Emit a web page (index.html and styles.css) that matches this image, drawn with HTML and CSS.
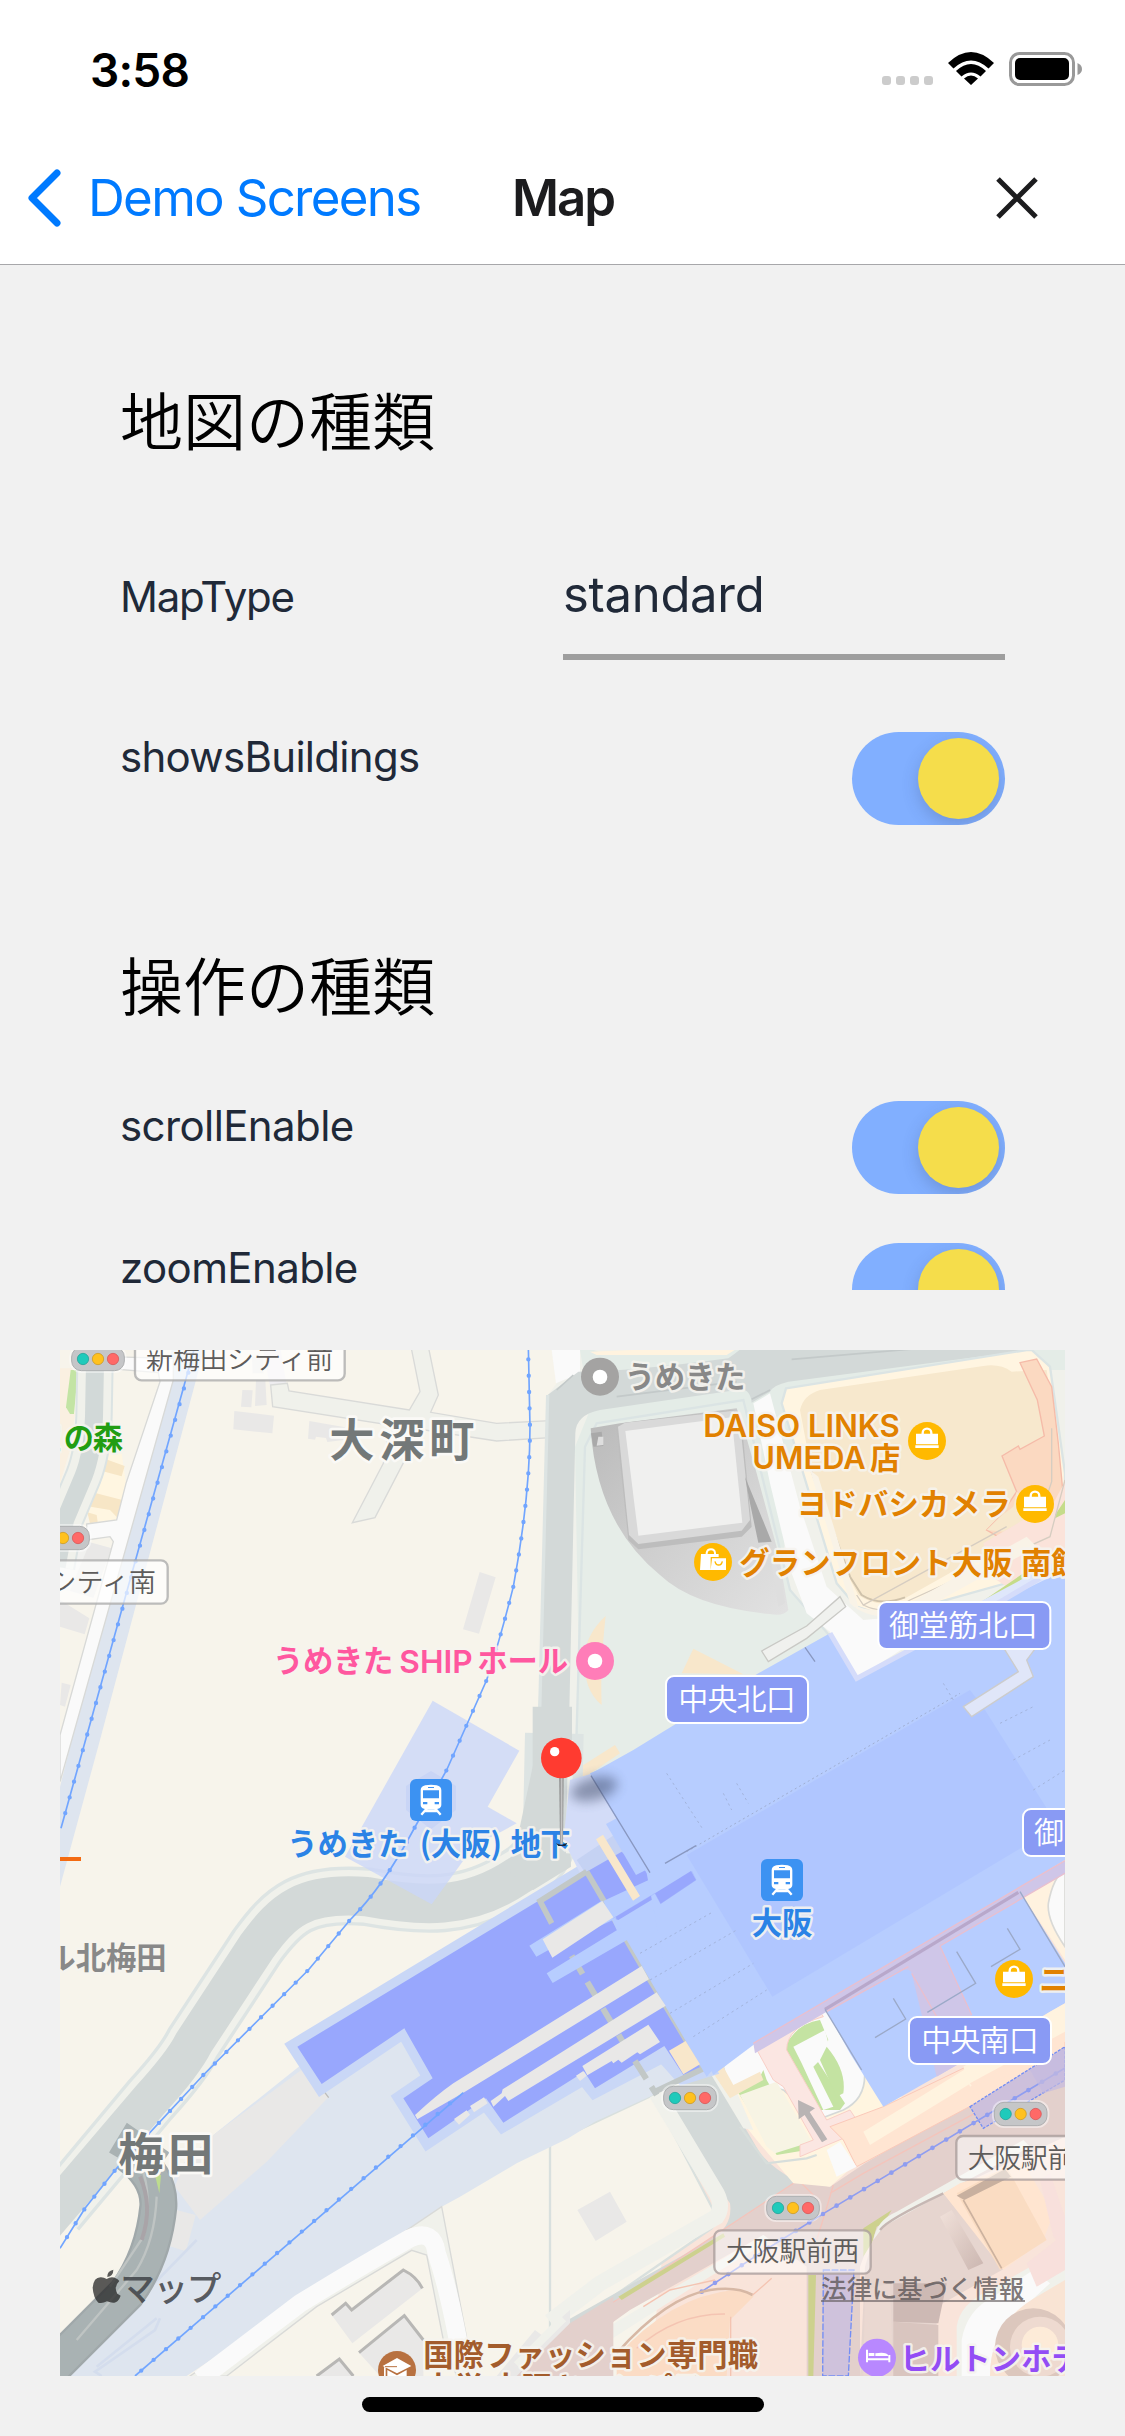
FILE: index.html
```html
<!DOCTYPE html>
<html lang="ja">
<head>
<meta charset="utf-8">
<title>Map</title>
<link rel="stylesheet" href="styles.css">
</head>
<body>
<div class="screen">
  <div class="status-bar">
    <span class="clock">3:58</span>
    <div class="indicators">
      <div class="signal"><i></i><i></i><i></i><i></i></div>
      <svg class="wifi" viewBox="0 0 46 33" width="46" height="33">
        <path d="M0 11Q23 -11 46 11L40.500 16.500Q23 0.500 5.500 16.500ZM8 19Q23 5 38 19L32.500 24.500Q23 16.500 13.500 24.500ZM16 26.500Q23 20.500 30 26.500L23 33Z"/>
      </svg>
      <svg class="battery" viewBox="0 0 73 34" width="73" height="34">
        <rect x="1.500" y="1.500" width="63" height="31" rx="9" fill="none" stroke="#999" stroke-width="3"/>
        <rect x="6" y="6" width="54" height="22" rx="5"/>
        <path d="M68.500 11Q73 13 73 17T68.500 23Z" fill="#999"/>
      </svg>
    </div>
  </div>
  <header class="nav">
    <a class="back">
      <svg viewBox="0 0 36 60" width="36" height="60"><path d="M31 5L6 30L31 55" fill="none" stroke="#007aff" stroke-width="7" stroke-linecap="round" stroke-linejoin="round"/></svg>
      <span class="back-label">Demo Screens</span>
    </a>
    <h1 class="nav-title">Map</h1>
    <svg class="close" viewBox="0 0 42 42" width="42" height="42"><path d="M2 2L40 40M40 2L2 40" fill="none" stroke="#1c1c1e" stroke-width="5"/></svg>
  </header>

  <main class="settings">
    <h2 class="section-title">地図の種類</h2>
    <div class="row row-select">
      <span class="label label-type">MapType</span>
      <div class="select"><span>standard</span></div>
    </div>
    <div class="row row-building">
      <span class="label">showsBuildings</span>
      <div class="switch"><div class="knob"></div></div>
    </div>
    <h2 class="section-title section-second">操作の種類</h2>
    <div class="row row-scroll">
      <span class="label">scrollEnable</span>
      <div class="switch"><div class="knob"></div></div>
    </div>
    <div class="row row-zoom">
      <span class="label">zoomEnable</span>
      <div class="switch"><div class="knob"></div></div>
    </div>
  </main>

  <svg class="map" viewBox="30 30 3015 3078" width="1005" height="1026">
    <defs>
      <filter id="soft" x="-50%" y="-50%" width="200%" height="200%"><feGaussianBlur stdDeviation="17"/></filter>
      <linearGradient id="plaza" x1="0" y1="0" x2="1" y2="1"><stop offset="0" stop-color="#b9b9b9"/><stop offset=".5" stop-color="#cfcfcf"/><stop offset="1" stop-color="#e2e2e2"/></linearGradient>
      <linearGradient id="tower" x1="0" y1="0" x2="1" y2="1"><stop offset="0" stop-color="#f1e1da"/><stop offset="1" stop-color="#cbb6b0"/></linearGradient>
      <linearGradient id="needle"><stop offset="0" stop-color="#777"/><stop offset=".5" stop-color="#c4c4c4"/><stop offset="1" stop-color="#888"/></linearGradient>
      <g id="signal">
        <rect x="-86" y="-42" width="172" height="84" rx="36" fill="#fff" opacity=".45"/>
        <rect x="-79" y="-35" width="158" height="70" rx="29" fill="#c5c6c8" stroke="#adafb0" stroke-width="3"/>
        <circle cx="-45" r="17" fill="#1fcabb" stroke="#189d91" stroke-width="2"/>
        <circle r="17" fill="#ffc11e" stroke="#c9941a" stroke-width="2"/>
        <circle cx="45" r="17" fill="#ff6967" stroke="#d44f4e" stroke-width="2"/>
      </g>
      <g id="bag">
        <circle r="57" fill="#ffb900"/>
        <path d="M-13 -20V-24A13 13 0 0 1 13 -24V-20" fill="none" stroke="#fff" stroke-width="7"/>
        <path d="M-33 -22H33V10H-33ZM-35 13H35V21H-35Z" fill="#fff"/>
      </g>
      <g id="train">
        <rect x="-63" y="-63" width="126" height="126" rx="18" fill="#3c92f2"/>
        <path fill-rule="evenodd" d="M-17 -44Q0 -47 17 -44Q31 -41 31 -29V14Q31 23 21 26L11 29H-11L-21 26Q-31 23 -31 14V-29Q-31 -41 -17 -44ZM-24 -29V-5H24V-29ZM-24 6V13H-11V6ZM11 6V13H24V6ZM-9 -39V-36H9V-39Z" fill="#fff"/>
        <path d="M-12 25L-29 44M12 25L29 44M-20 33H20" stroke="#fff" stroke-width="7"/>
      </g>
    </defs>

    <rect x="30" y="30" width="3015" height="3078" fill="#f7f4eb"/>

    <!-- western block and railway -->
    <path d="M30 85H68L55 200L75 222L60 330L30 430Z" fill="#faf0e1"/>
    <path d="M62 90H84L72 222H60L48 202Z" fill="#c3e4a4"/>
    <path d="M160 330L215 340L232 460L205 540L120 552L110 500L150 410Z" fill="#fff6e1"/>
    <path d="M160 355L224 378L215 409L153 392ZM133 458L217 480L207 538L180 510L122 500ZM112 517L140 525L143 545L120 550Z" fill="#f7e6c6"/>
    <path d="M30 660L80 600L185 625L130 773L30 745Z" fill="#f1f1ef"/>
    <path d="M120 607L185 625L130 773L60 752ZM30 780L118 835L104 883L30 860ZM35 1028L62 1035L45 1100L30 1095Z" fill="#e9e8e7"/>
    <path d="M135 70L132 230Q128 340 100 410L45 540L20 680" fill="none" stroke="#dbe3e3" stroke-width="112"/>
    <path d="M135 70L132 230Q128 340 100 410L45 540L20 680" fill="none" stroke="#f0f1eb" stroke-width="100"/>
    <path d="M135 70L132 230Q128 340 100 410L45 540L20 680" fill="none" stroke="#d2d9d8" stroke-width="54"/>
    <path d="M365 30H462L150 1200L30 1640V1340L65 1200Z" fill="#dee5ef"/>
    <path d="M110 552L200 540L228 430L330 125L325 98L170 85V50L370 55V120L30 1325V1185L190 605L180 590L110 600Z" fill="#fafafa" stroke="#d8d9d7" stroke-width="4"/>
    <g fill="none" stroke="#71a5ff"><path d="M436 15L33 1465" stroke-width="5"/><path d="M415 98L33 1465" stroke-width="13" stroke-linecap="round" stroke-dasharray="0 49"/></g>
    <path d="M606 50H640V100H608ZM618 120H646L650 195L615 198ZM577 150L608 151L604 202L573 200ZM553 213L672 227L667 280L550 268ZM778 243L885 262L880 300L832 306L828 294L798 290L795 299L774 296ZM1289 696L1337 712L1287 881L1239 868Z" fill="#e9e8e7"/>
    <path d="M640 30H692L712 150H662Z" fill="#eeedf0"/>
    <path d="M662 135L712 130L717 153L1078 210L1110 155L1083 20H1135L1165 165L1142 217L1340 250L1500 242V293L1340 303L1125 270L1062 365L975 533L907 548L1000 370L1020 255L668 200Z" fill="#f0f1eb" stroke="#d9dad8" stroke-width="4"/>

    <!-- northern avenue and park -->
    <path d="M1505 30H3045V1200H1550L1530 1280H1470L1490 170L1520 130Z" fill="#f0f1eb"/>
    <path d="M1505 30H1590V100L1518 130Z" fill="#fafafa"/>
    <path d="M1590 30H1630L1680 45L1950 20H3045V90H2950L2240 185L2170 1000L1590 1200L1575 320L1620 210Z" fill="#e4ece7"/>
    <path d="M1605 320L1575 1340L1850 1230L2350 900L2220 750L2080 180L1640 250Z" fill="#e6ede8" stroke="#dbe4e4" stroke-width="7"/>
    <path d="M1493 165L1585 95Q1740 95 2035 55Q2060 38 2080 20H3045V30H2940L2215 125Q2170 135 2160 155L2105 188Q2100 140 2060 150L1650 210Q1577 225 1576 280L1550 1480L1457 1500L1465 1130Z" fill="#d3d9d8"/>
    <path d="M1493 165L1472 1000L1460 1470" stroke="#dde4e3" stroke-width="10" fill="none"/>
    <path d="M1700 170L2060 125M2225 58L2670 20M1520 150L1570 105M2105 178L2160 150" fill="none" stroke="#c3c9c9" stroke-width="5"/>
    <path d="M1620 35L2000 20H2070L2030 45L1640 45Z" fill="#fff3df"/>
    <path d="M2110 190L2160 160L2250 500L2330 740L2440 840L2550 830L2600 900L2420 1015L2340 875L2270 820L2225 700L2160 430Z" fill="#fafafa"/>
    <path d="M2208 145L2930 30H2945L3000 80L3045 400V680L2510 830L2420 800L2360 730L2220 270L2195 190Z" fill="#fff5e1" stroke="#dbe4e4" stroke-width="7"/>
    <path d="M2250 210Q2260 165 2310 150L2800 78Q2850 70 2885 95L2990 90L3025 330L3000 530L2565 775Q2490 810 2425 765L2380 680L2280 370Z" fill="#f7e8cd"/>
    <path d="M2285 395L2400 710L2435 765Q2490 800 2565 772" fill="none" stroke="#cfc2ab" stroke-width="6"/>
    <path d="M2910 68L2960 57L3005 140L3025 310L3040 470L2960 650L2880 610L2810 570L2850 530L2900 455L2856 348L2905 318L2910 328L2983 288L2962 180Z" fill="#fbd9c1" stroke="#f5bba9" stroke-width="4"/>
    <path d="M2900 455L2960 520L2860 575L2810 570L2850 530L2890 500ZM2960 600L2870 610L2880 590Z" fill="#f7e8cd"/>
    <path d="M2985 535L3045 425V800L2960 800L2840 720L2800 610L2920 540Z" fill="#fbe3da"/>
    <path d="M3015 525L3045 480V520L3015 535ZM2795 785L2920 700V715L2800 800Z" fill="#c5dc8a"/>
    <path d="M2420 765L2440 795L2870 560M2440 795Q2510 830 2580 780L3000 590L3045 420M3005 265V425L2980 500" fill="none" stroke="#d6cdc1" stroke-width="4"/>
    <path d="M2425 800Q2490 825 2570 795L2930 590L2960 620L2600 820Q2460 850 2400 790L2280 390L2305 410Z" fill="#f9f3e7"/>
    <path d="M2135 933L2270 858L2370 770L2387 800L2270 895L2155 965Z" fill="#f0f1ee" stroke="#c9c9c5" stroke-width="4"/>
    <path d="M2790 785L3045 650V900H2900Z" fill="#dfe7fb"/>

    <!-- domed plaza -->
    <path d="M1622 265L1710 250L2060 205L2080 260L2120 400L2185 640L2215 810Q2200 830 2160 822Q1930 800 1830 705Q1640 550 1622 265Z" fill="url(#plaza)"/>
    <path d="M1700 270L1725 248L2050 210L2075 250L2105 560L2075 590L1765 628L1735 600Z" fill="#bdbdbd"/>
    <path d="M1704 260L1725 248L2050 212L2070 245L2100 540L2075 572L1765 612L1737 585Z" fill="#d9d9d9"/>
    <path d="M1726 273L2045 232L2077 548L1765 587Z" fill="#f0f0ef"/>
    <path d="M1623 280L1655 275L1660 318L1630 320ZM2085 410L2165 605L2125 608L2100 490Z" fill="#a9a9a9"/>
    <path d="M2160 640L2190 700L2205 790L2185 800ZM1645 290H1660V315L1640 317Z" fill="#dedede"/>
    <path d="M1667 828Q1650 980 1655 1095Q1600 1050 1602 950Q1610 880 1667 828ZM1930 926L2080 1003L1895 1000ZM1585 1285L1695 1215L1710 1240L1600 1315Z" fill="#f8e7cb"/>

    <!-- south-east district -->
    <path d="M1800 3108L1890 2225L2200 2050L3045 1550V3108Z" fill="#f9e4da"/>
    <path d="M1500 2410L1810 2265L1995 2620Q2005 2640 1985 2665L1500 3000Z" fill="#f7f4eb" stroke="#d9e0de" stroke-width="7"/>
    <path d="M1810 2260L1990 2200Q2060 2320 2130 2440Q2220 2540 2350 2550L2280 2600L2020 2700L1590 2950L1500 3000V2970L1980 2700Q2050 2660 2040 2590L1820 2290Z" fill="#d3d9d8"/>
    <path d="M1820 2260L2000 2560Q2020 2600 2000 2630L1650 2830L1500 2945" fill="none" stroke="#f0f1eb" stroke-width="48"/>
    <path d="M1500 3000L1700 2880L2245 2520L2340 2540L2445 2470L3045 2120V2390L2680 2560L2470 2670L2430 2780V3108H2270V2780L2140 2685L1900 2820L1740 2910L1530 3060L1430 3108H1400L1440 3080Z" fill="#e3d0cc"/>
    <path d="M1500 3000L1700 2880L2245 2520L2290 2565M2350 2535L2325 2620L2300 2700M2830 2290L2440 2500L2340 2560" fill="none" stroke="#f4c4bb" stroke-width="4"/>
    <path d="M1990 2210L2080 2130L2420 1990L2530 2250L2630 2330L2420 2470L2340 2540L2230 2530L2120 2400L2080 2350Z" fill="#fff5e0"/>
    <path d="M1990 2160L2040 2210L2110 2370L2080 2365L1975 2190Z" fill="#f0f1eb"/>
    <path d="M2020 2180Q2100 2080 2200 2060L2300 2000L2350 2020L2440 2170Q2460 2270 2380 2310L2300 2340L2200 2250L2120 2230L2040 2260Z" fill="#fafafa" stroke="#d5d9d8" stroke-width="5"/>
    <path d="M2205 2120Q2240 2050 2310 2040L2335 2100L2300 2160L2385 2290L2370 2310L2310 2310L2220 2160Z" fill="#c4e3a2"/>
    <path d="M2230 2120L2325 2070L2340 2130L2290 2180L2350 2300L2320 2310L2255 2170Z" fill="#fafafa"/>
    <path d="M2330 2120Q2390 2190 2380 2260L2360 2270L2310 2160ZM2060 2250L2130 2210L2140 2190L2150 2220L2270 2430L2180 2445Z" fill="#c4e3a2"/>
    <path d="M2070 2265L2180 2225L2285 2405L2175 2440L2150 2420Z" fill="#f7f4e4"/>
    <path d="M1990 2200L2020 2180L2050 2235L2130 2195L2140 2220L2040 2275Z" fill="#f8e7cb"/>
    <path d="M2070 2360L2150 2470L2270 2455L2300 2445" fill="none" stroke="#d7dedb" stroke-width="7"/>
    <path d="M2110 2110L2300 2000L2320 2030Q2210 2060 2210 2130L2330 2340L2400 2310L2440 2370L2320 2420L2250 2450V2415L2290 2400L2200 2240L2170 2220Z" fill="#fbe6e2" stroke="#f9cfc7" stroke-width="3"/>
    <path d="M2340 2360L2500 2300L2750 2180L2780 2230L2900 2160L3045 2070V2120L2890 2230L2420 2480L2380 2400Z" fill="#ffe5d2" stroke="#fbc9b9" stroke-width="3"/>
    <path d="M2440 2375L2750 2185L2770 2225L2460 2415Z" fill="#fff3df"/>
    <path d="M2330 2430L2370 2405L2420 2480L2360 2510Z" fill="#fafafa"/>
    <path d="M2244 2280L2295 2305L2279 2316L2332 2398L2316 2407L2264 2325L2246 2338Z" fill="#b9b4b4"/>
    <path d="M2760 2300L3045 2120V2220L2800 2365Z" fill="#cdc0dc" stroke="#728df5" stroke-width="4" stroke-dasharray="9 4"/>
    <path d="M2320 2790H2412L2395 3108H2318Z" fill="#cfc2dc" stroke="#728df5" stroke-width="4" stroke-dasharray="20 5"/>
    <g fill="none" stroke="#8f9df0"><path d="M1955 2855L2125 2743L2325 2618L3045 2184" stroke-width="5"/><path d="M1955 2855L2125 2743L2325 2618L3045 2184" stroke-width="14" stroke-linecap="round" stroke-dasharray="0 48"/></g>
    <path d="M1705 2870L2020 2680L2025 2690L1715 2880ZM2275 2805H2298L2290 3108H2275ZM2440 2665L2525 2610L2440 2750Z" fill="#cdd18e"/>
    <path d="M1650 2975L2140 2685L2160 2700L1930 2840L1680 3000Z" fill="#f0f1eb"/>
    <path d="M1700 3050Q1860 2870 2050 2850Q2110 2850 2110 2870L2040 2940L2030 3108H1700Z" fill="#fbdcc5"/>
    <path d="M1700 3040Q1850 2870 1980 2850Q2060 2838 2108 2865" fill="none" stroke="#d7b8a5" stroke-width="8"/>
    <path d="M1760 3025Q1880 2920 2025 2922M2108 2865L2165 2815M2042 2930V3108M1995 2820L1860 2850L1780 2900" fill="none" stroke="#f4c4b2" stroke-width="4"/>
    <path d="M2480 2660L2680 2560L2865 2785L2660 2900V3108H2430L2445 2780Z" fill="#e6d5cf"/>
    <path d="M2470 2700Q2480 2640 2540 2615L2920 2400L2940 2420L2680 2560L2500 2660Z" fill="#f0f1eb"/>
    <path d="M2490 2670Q2510 2640 2680 2560" fill="none" stroke="#c6b7b3" stroke-width="7"/>
    <path d="M2680 2560L2730 2530L2920 2470L3010 2620L2980 2700L2860 2790Z" fill="#ffe5d0"/>
    <path d="M2720 2560L2870 2480L2990 2700L2850 2790Z" fill="#fadcc2"/>
    <path d="M2720 2567L2865 2487L2883 2510L2743 2580Z" fill="#c8b09f"/>
    <path d="M2740 2580L2855 2785" stroke="#ccb29f" stroke-width="5"/>
    <path d="M2670 2630L2705 2610L2800 2770L2755 2790Z" fill="url(#tower)"/>
    <path d="M2445 2850L2520 2830L2530 3108H2440Z" fill="#ead8d1"/>
    <path d="M2530 2830H2690L2665 2950L2530 2945Z" fill="#cdb9b4"/>
    <path d="M2530 2945L2665 2955V3108H2530Z" fill="#d9c5bf"/>
    <path d="M2720 3108V2960Q2730 2890 2820 2850L3045 2720V3108Z" fill="#f0f1eb"/>
    <path d="M2735 3108V3000Q2750 2910 2830 2870L2950 2790L3000 2830L2880 2940Q2820 3010 2820 3108Z" fill="#fafafa"/>
    <path d="M2960 2870L3045 2820V3108H2820Q2820 2950 2960 2870Z" fill="#f9e4d4"/>
    <circle cx="2950" cy="3020" r="115" fill="#dcc7bd"/><circle cx="2970" cy="3020" r="90" fill="#eedad0"/><circle cx="2970" cy="3015" r="55" fill="#fdebd8"/>
    <path d="M2930 2770L3045 2680V2790L2960 2840ZM2970 2520L3000 2500L3045 2630V2730L3010 2690Z" fill="#f8e0dc"/>

    <!-- rail yard -->
    <path d="M765 2165L490 2385L375 2500L340 2700L230 2900L30 3080V3108H410L1175 2600L1230 2570L1400 2470L1555 2395L1635 2345L1810 2265L1950 2180L1560 1900L800 2150Z" fill="#dee5ef"/>
    <path d="M765 2182L835 2272L650 2465L450 2640L375 2540L400 2470L490 2385ZM360 2605L437 2625L408 2734L330 2710Z" fill="#e9e8e7"/>
    <path d="M768 2183L836 2273" stroke="#bdbcba" stroke-width="4"/>
    <path d="M440 2700L220 2925L180 2925L150 2985L30 3100M330 2935L315 2970L135 3095L155 3108M320 2935L140 3080" fill="none" stroke="#d4dded" stroke-width="8"/>
    <path d="M410 3115L1175 2600L1255 3020V3108H1220L1180 3000L1130 2745L1085 2731L800 2900L530 3108Z" fill="#f0f1eb" stroke="#d9dad8" stroke-width="4"/>
    <path d="M450 3118L750 2890Q930 2780 1080 2695Q1150 2665 1160 2740Q1200 2860 1235 3060" fill="none" stroke="#fafafa" stroke-width="55"/>
    <path d="M845 2925L887 2890L905 2910L1060 2790L1115 2840L1118 2845L907 3010ZM927 3038L1063 2927L1120 3000V3108H990ZM800 3108L868 3057L910 3108ZM1340 3108L1455 2970L1475 2985L1560 2910V3108ZM1582 2610L1680 2555L1730 2645L1637 2703Z" fill="#e9e8e7"/>
    <path d="M845 2925L887 2890L905 2910L1060 2790Q1100 2810 1117 2845M927 3038L1063 2927L1120 3000M800 3108L868 3057L910 3108" fill="none" stroke="#b8b7b5" stroke-width="9"/>
    <path d="M1400 3108L1560 2950L1690 2870V3108Z" fill="#e3d0cc"/>
    <path d="M1540 2935L1400 3075" stroke="#f0f1eb" stroke-width="24"/>

    <!-- curved main street -->
    <g fill="none">
      <path d="M1513 1180L1507 1460Q1490 1560 1400 1610C1250 1710 1110 1700 950 1670C760 1655 700 1710 620 1820L430 2110Q400 2170 300 2280L20 2615" stroke="#dde4e3" stroke-width="176"/>
      <path d="M1513 1460Q1490 1560 1400 1610C1250 1710 1110 1700 950 1670C760 1655 700 1710 620 1820L430 2110Q400 2170 300 2280L20 2615" stroke="#f0f1eb" stroke-width="156"/>
      <path d="M1507 1100V1460Q1490 1560 1400 1610C1250 1710 1110 1700 950 1670C760 1655 700 1710 620 1820L430 2110Q400 2170 300 2280L-20 2655" stroke="#d3d9d8" stroke-width="118"/>
      <path d="M1465 1200H1553L1563 1580L1450 1650L1380 1600Z" fill="#d3d9d8"/>
      <path d="M1562 1200L1556 1540" stroke="#f0f1eb" stroke-width="16"/>
      <path d="M235 2440Q330 2510 325 2600Q310 2750 230 2860L-20 3110" stroke="#a0a8aa" stroke-width="114"/>
      <path d="M235 2440Q330 2510 325 2600Q310 2750 230 2860L-20 3110" stroke="#a9b2b3" stroke-width="100"/>
      <path d="M270 2470Q310 2560 280 2690L180 2840M320 2570Q315 2700 260 2790L80 3000" stroke="#bfc4c3" stroke-width="7"/>
      <path d="M190 2445L235 2370L350 2450" stroke="#a9b2b3" stroke-width="30"/>
      <path d="M270 2510Q310 2600 275 2700" stroke="#a9a4a8" stroke-width="12"/>
    </g>
    <path d="M315 2505H333L328 2560Z" fill="#bddc8e"/>
    <path d="M1148 1082L1408 1232L1313 1400L1400 1450L1270 1520L1145 1693L885 1550Z" fill="#cbd6f8" opacity=".78"/>
    <path d="M1143 1293L1218 1338V1410L1143 1468L1068 1410V1338Z" fill="#bfcdf5" opacity=".55"/>

    <!-- Osaka station tracks and platforms -->
    <g transform="translate(1050 1380)">
      <path d="M-308 740L560 215L680 140L750 230L680 420L915 805L850 825L790 758L585 865L553 825L310 967L258 900L85 1015L10 895L98 835L13 685L-235 852Z" fill="#c9d7f6" stroke="#c9d7f6" stroke-width="56"/>
      <path d="M510 -60L580 -80L757 230L620 280L540 220L490 120Z" fill="#d3dcf8"/>
      <path d="M530 180L650 100L680 160L560 225Z" fill="#c5d2f3"/>
      <path d="M-308 740L560 215L665 155L760 230L680 420L915 805L850 825L793 738L585 865L553 815L310 968L258 895L85 1015L10 895L98 835L13 685L-235 852Z" fill="#98a7fd"/>
      <path d="M560 215L420 303L455 370M560 215L610 300L720 490L870 740L912 805L765 875" fill="none" stroke="#c2c8c7" stroke-width="17"/>
      <path d="M515 467L665 720L770 885" fill="none" stroke="#c2c8c7" stroke-width="18" stroke-dasharray="64 28"/>
      <path d="M570 -80L620 -100L800 -140L1000 220L980 760L920 830L680 420L650 390L610 303L757 235Z" fill="#b7cdff"/>
      <path d="M618 72L650 55L742 208L708 225Z" fill="#b7cdff"/>
      <path d="M640 355L765 280L873 213L888 240L782 311L768 292L655 360Z" fill="#98a7fd"/>
      <path d="M388 437L605 302L650 355L455 445L409 470ZM440 520L660 385L690 415L458 549Z" fill="#b7cdff"/>
      <path d="M45 945Q110 885 160 850L725 498L747 538L190 878L52 958ZM272 903L305 880L308 868L770 577L797 617L325 903L315 888L280 920ZM547 798L745 674L780 726L720 763L712 757L665 788L655 779L640 790L635 783L562 826ZM428 418L607 303L640 352L457 473ZM528 827L550 813L560 827L540 843ZM162 957L200 931L210 944L177 974ZM210 918L252 892L263 910L222 937Z" fill="#e9e8e7"/>
      <path d="M588 118L609 104L720 288L699 302ZM807 752L857 723L900 793L850 823Z" fill="#f8e7cb"/>
    </g>

    <!-- station hall -->
    <path d="M1625 1300L1750 1230L2125 1000L2340 880L2420 1015L2860 780L3045 690V1560L2320 1995L2110 2115L1990 2205L1850 1910L1790 1600Z" fill="#b7cdff"/>
    <path d="M1690 1735L1815 1660L1832 1691L1938 1620L1925 1593" fill="none" stroke="#98a7fd" stroke-width="1"/>
    <path d="M1815 1660L1923 1593L1938 1620L1832 1691Z" fill="#98a7fd"/>
    <path d="M2340 880L2420 1015L2860 780L3045 670" fill="none" stroke="#d5dcfa" stroke-width="15"/>
    <path d="M1910 1545L2760 1050L2805 1110L2990 1405L2920 1520L2167 1970Z" fill="#b0c6ff"/>
    <path d="M1910 1535L2730 1060" stroke="#9faed2" stroke-width="3" stroke-dasharray="6 9"/>
    <path d="M1623 1307L1800 1598M1845 1570L1938 1517M2265 922L2295 965" stroke="#8998c1" stroke-width="4" fill="none"/>
    <path d="M1850 1300L1960 1470M2020 1360L2045 1410M2060 1330L2095 1390M1770 1840L1990 1715M1800 1920L2060 1770M1860 2020L2110 1870M1930 2090L2150 1950M2850 1150L2950 1100M2890 1260L3000 1200M2950 1350L3045 1290M2680 1030L2710 1080" fill="none" stroke="#a3b4dc" stroke-width="3" stroke-dasharray="7 10"/>
    <path d="M2740 1100L2905 995L2865 930L2990 880L2930 960L2950 1010L2765 1130Z" fill="#e0e6f9" stroke="#ccc" stroke-width="4"/>

    <!-- south concourse and department stores -->
    <path d="M2320 1995L2910 1655L3045 1870V1990L2500 2300L2400 2140Z" fill="#b7cdff"/>
    <path d="M2910 1655L3045 1560V1860Z" fill="#fff2df"/><path d="M2995 1690Q3010 1610 3045 1590V1820Q2990 1740 2995 1690Z" fill="#fafafa" stroke="#d9d9d6" stroke-width="5"/>
    <path d="M3000 2015L3045 1990V2080L2760 2240L2740 2180Z" fill="#fff3df"/>
    <path d="M2760 2230L3045 2075V2105L2780 2260Z" fill="#ffe5d2"/>
    <path d="M2110 2110L3045 1562V1600L2670 1818L2765 2025L2730 2170L2660 2210L2585 1900Q2580 1880 2540 1895L2330 2015L2115 2140Z" fill="#cfc6e8"/>
    <path d="M2110 2110L3045 1562M2670 1818L2765 2025M2585 1900L2660 2030M2670 1818L3045 1600M2330 2015L2575 1880" stroke="#e9bfce" stroke-width="4" fill="none"/>
    <path d="M2325 2008L2905 1657" stroke="#b8a8cb" stroke-width="10"/>
    <path d="M2325 2008L2435 2190M2530 1975L2567 2037L2475 2093M2720 1835L2777 1930L2632 2017M2872 1765L2910 1828L2823 1880M2910 1655L3045 1880" fill="none" stroke="#9ba9c8" stroke-width="4"/>
    <path d="M2940 2190L3045 2125V2240L2980 2260Z" fill="#c5bbe0" opacity=".7"/>

    <!-- JR tracks -->
    <g fill="none" stroke="#71a5ff">
      <path d="M1435 20L1440 260Q1440 470 1390 740Q1350 900 1310 1020L1190 1290L1090 1470Q1000 1640 900 1740L775 1890L460 2205L200 2485L105 2605L30 2725" stroke-width="5"/>
      <path d="M1435 58L1440 260Q1440 470 1390 740Q1350 900 1310 1020L1190 1290L1090 1470Q1000 1640 900 1740L775 1890L460 2205L200 2485L105 2605L30 2725" stroke-width="13" stroke-linecap="round" stroke-dasharray="0 49"/>
      <path d="M1240 2258L255 3108" stroke-width="5"/><path d="M1200 2290L255 3108" stroke-width="13" stroke-linecap="round" stroke-dasharray="0 49"/>
    </g>
    <path d="M30 1557H93" stroke="#f36b12" stroke-width="12"/>

    <use href="#signal" x="144" y="57"/><use href="#signal" x="39" y="594"/><use href="#signal" x="1920" y="2274"/><use href="#signal" x="2912" y="2322"/><use href="#signal" x="2229" y="2604"/>

    <!-- intersection and exit plates -->
    <g fill="#fff" fill-opacity=".67" stroke="#aaa" stroke-opacity=".78" stroke-width="7">
      <rect x="255" y="-30" width="629" height="151" rx="20"/><rect x="-100" y="661" width="453" height="130" rx="20"/>
    </g>
    <g fill="#fff" fill-opacity=".5" stroke="#aa9d9c" stroke-opacity=".8" stroke-width="7"><rect x="1993" y="2671" width="469" height="130" rx="20"/><rect x="2719" y="2388" width="430" height="131" rx="20"/></g>
    <g class="cross-label">
      <text x="288" y="87" textLength="562">新梅田シティ前</text><text x="318" y="755" text-anchor="end">梅田シティ南</text>
      <text x="2028" y="2764" textLength="400">大阪駅前西</text><text x="2753" y="2484" textLength="400">大阪駅前東</text>
    </g>
    <g fill="#899af4" stroke="#fff" stroke-width="6"><rect x="1848" y="1008" width="426" height="141" rx="24"/><rect x="2485" y="786" width="516" height="141" rx="24"/><rect x="2919" y="1407" width="250" height="141" rx="24"/><rect x="2577" y="2031" width="426" height="141" rx="24"/></g>
    <g class="exit-label"><text x="1885" y="1110" textLength="352">中央北口</text><text x="2517" y="888" textLength="446">御堂筋北口</text><text x="2952" y="1510">御堂筋</text><text x="2614" y="2134" textLength="352">中央南口</text></g>

    <!-- place names -->
    <g class="district"><text x="838" y="350" textLength="435">大深町</text><text x="205" y="2493" textLength="285">梅田</text></g>
    <g class="poi">
      <text x="41" y="326" fill="#229d12" textLength="178">の森</text><text x="-56" y="326" fill="#229d12">空</text>
      <text x="1724" y="145" fill="#888" textLength="362">うめきた</text>
      <text x="350" y="1886" fill="#888" text-anchor="end">ホテル北梅田</text>
      <text x="669" y="997" fill="#ff579f" textLength="361">うめきた</text><text x="1048" y="999" fill="#ff579f" class="latin" textLength="220" lengthAdjust="spacingAndGlyphs">SHIP</text><text x="1282" y="997" fill="#ff579f" textLength="272">ホール</text>
      <text x="1960" y="290" fill="#e18100" class="latin" textLength="589" lengthAdjust="spacingAndGlyphs">DAISO LINKS</text>
      <text x="2107" y="387" fill="#e18100" class="latin" textLength="340" lengthAdjust="spacingAndGlyphs">UMEDA</text><text x="2460" y="387" fill="#e18100">店</text>
      <text x="2240" y="526" fill="#e18100" textLength="642">ヨドバシカメラ</text>
      <text x="2068" y="702" fill="#e18100" textLength="820">グランフロント大阪</text><text x="2913" y="702" fill="#e18100">南館</text>
      <text x="712" y="1545" fill="#2b83e6" textLength="363">うめきた</text><text x="1109" y="1545" fill="#2b83e6" textLength="247">(大阪)</text><text x="1382" y="1545" fill="#2b83e6" textLength="180">地下</text>
      <text x="2105" y="1782" fill="#2b83e6" textLength="182">大阪</text>
      <text x="2968" y="1954" fill="#e18100">ニトリ</text>
      <text x="1120" y="3079" fill="#a35c2c" textLength="1004">国際ファッション専門職</text><text x="1120" y="3178" fill="#a35c2c">大学 大阪キャンパス</text>
      <text x="2549" y="3090" fill="#934df5">ヒルトンホテル</text>
    </g>

    <!-- place markers -->
    <circle cx="1650" cy="110" r="57" fill="#a4a3a2"/><circle cx="1650" cy="111" r="22" fill="#fff"/>
    <circle cx="1635" cy="963" r="57" fill="#ff7db8"/><circle cx="1635" cy="963" r="22" fill="#fff"/>
    <use href="#bag" x="2631" y="303"/><use href="#bag" x="2955" y="492"/><use href="#bag" x="2892" y="1917"/>
    <circle cx="1989" cy="666" r="57" fill="#ffb900"/><path d="M1970 644V639Q1972 628 1983 628T1995 639V644" fill="none" stroke="#fff" stroke-width="6"/><path d="M1953 642H2006V651H1982V690H1950ZM1986 655H2028V690H1982Z" fill="#fff"/><path d="M1995 664Q1997 675 2006 675T2017 664" fill="none" stroke="#ffb900" stroke-width="4"/>
    <use href="#train" x="1143" y="1380"/><use href="#train" x="2196" y="1620"/>
    <circle cx="1041" cy="3090" r="57" fill="#b87140"/><path d="M998 3078L1041 3054L1084 3078L1041 3100ZM1012 3090L1041 3106L1070 3090V3108H1012ZM1002 3082H1007V3108H1002Z" fill="#fff"/><path d="M1005 3080H1041" stroke="#b87140" stroke-width="3"/>
    <circle cx="2481" cy="3053" r="57" fill="#b888ff"/><path d="M2451 3029V3067M2450 3058H2518M2518 3045V3067" fill="none" stroke="#fff" stroke-width="6"/><path d="M2456 3039H2473V3048H2456ZM2476 3040Q2510 3034 2516 3048H2476Z" fill="#fff"/>

    <!-- dropped pin -->
    <ellipse cx="1632" cy="1346" rx="72" ry="34" transform="rotate(-15 1632 1346)" fill="#38435f" opacity=".48" filter="url(#soft)"/>
    <path d="M1518 1510L1534 1515L1552 1508L1546 1518H1525Z" fill="#17283c"/>
    <path d="M1528 1300H1541L1539 1513H1530Z" fill="url(#needle)"/>
    <circle cx="1534" cy="1254" r="61" fill="#ff3b30"/><circle cx="1514" cy="1235" r="14" fill="#fff"/>

    <!-- attribution -->
    <path d="M190 2789Q190 2808 172 2811Q171 2793 190 2789ZM170 2817Q190 2804 208 2823Q190 2840 202 2861L212 2867Q205 2886 193 2888Q183 2889 171 2884Q156 2892 145 2888Q130 2873 128 2843Q131 2811 153 2812Q162 2813 170 2817Z" fill="#252525" fill-opacity=".75"/>
    <text class="attribution" x="211" y="2882" textLength="303">マップ</text>
    <text class="legal" x="2314" y="2874" textLength="608">法律に基づく情報</text><path d="M2313 2883H2925" stroke="#5d5657" stroke-opacity=".8" stroke-width="5"/>
  </svg>
  <div class="home-indicator"></div>
</div>
</body>
</html>
```

FILE: styles.css
```css
* { box-sizing: border-box; }
body { margin: 0; background: #f1f1f1; }
.screen {
  width: 1125px;
  height: 2436px;
  display: flex;
  flex-direction: column;
  overflow: hidden;
  background: #f1f1f1;
  font-family: Inter, "Noto Sans CJK JP", sans-serif;
}
.status-bar {
  height: 132px;
  padding: 42px 43px 0 90px;
  display: flex;
  justify-content: space-between;
  background: #fff;
}
.clock { font-size: 46px; line-height: 56px; font-weight: 600; letter-spacing: -.8px; }
.indicators { display: flex; align-items: flex-start; padding-top: 10px; }
.signal { display: flex; gap: 5px; padding-top: 24px; margin-right: 15px; }
.signal i { width: 9px; height: 9px; border-radius: 3px; background: #ccc; }
.battery { margin-left: 15px; }

.nav {
  height: 133px;
  flex: none;
  padding: 0 87px 0 26px;
  display: flex;
  align-items: center;
  background: #fff;
  border-bottom: 1px solid #a7a7aa;
}
.back { display: flex; align-items: center; color: #007aff; width: 486px; gap: 26px; }
.back-label { font-size: 51px; line-height: 64px; letter-spacing: -1.7px; white-space: nowrap; }
.nav-title { margin: 0 auto 0 0; font-size: 51px; line-height: 64px; font-weight: 600; letter-spacing: -2px; color: #1c1c1e; }

.settings { height: 1025px; flex: none; overflow: hidden; padding: 106px 120px 0; }
.section-title { margin: 0; height: 94px; font: 350 63px/94px "Noto Sans CJK JP", sans-serif; color: #000; }
.row { display: flex; justify-content: space-between; color: #202938; }
.label { font-size: 42px; line-height: 50px; letter-spacing: -.7px; }
.row-select { padding-top: 87px; }
.row-select .label-type { padding-top: 20px; letter-spacing: -1.2px; }
.select { width: 442px; height: 108px; border-bottom: 6px solid #9e9e9e; font-size: 49px; line-height: 86px; letter-spacing: -.3px; }
.row-building { padding-top: 72px; }
.section-second { margin-top: 111px; }
.row-scroll { padding-top: 71px; }
.row-zoom { padding-top: 49px; }
.row-zoom .label, .row-scroll .label { letter-spacing: -.6px; }
.switch { width: 153px; height: 93px; border-radius: 47px; padding: 6px; display: flex; justify-content: flex-end; background: #81afff; overflow: hidden; }
.knob { width: 81px; height: 81px; border-radius: 50%; background: #f5dd4b; box-shadow: 0 6px 16px rgba(60, 70, 110, .25); }

.map { display: block; flex: none; margin: 60px 60px 0; overflow: hidden; font-family: "Noto Sans CJK JP", sans-serif; }
.cross-label { font-size: 81px; font-weight: 350; fill: #5e5c5b; }
.exit-label { font-size: 90px; font-weight: 350; fill: #fff; }
.district { font-size: 136px; font-weight: 700; fill: #737878; stroke: #faf9f6; stroke-width: 16px; paint-order: stroke; stroke-linejoin: round; }
.poi { font-size: 91px; font-weight: 700; stroke: #f6f4ef; stroke-opacity: .88; stroke-width: 15px; paint-order: stroke; stroke-linejoin: round; }
.latin { font-family: Inter, sans-serif; font-size: 94px; font-weight: 600; }
.attribution { font-size: 104px; font-weight: 500; fill: #3f4247; fill-opacity: .85; }
.legal { font-size: 76px; font-weight: 500; fill: #5d5657; fill-opacity: .8; }
.home-indicator { width: 402px; height: 15px; border-radius: 8px; background: #000; margin: 21px auto 0; }
```
